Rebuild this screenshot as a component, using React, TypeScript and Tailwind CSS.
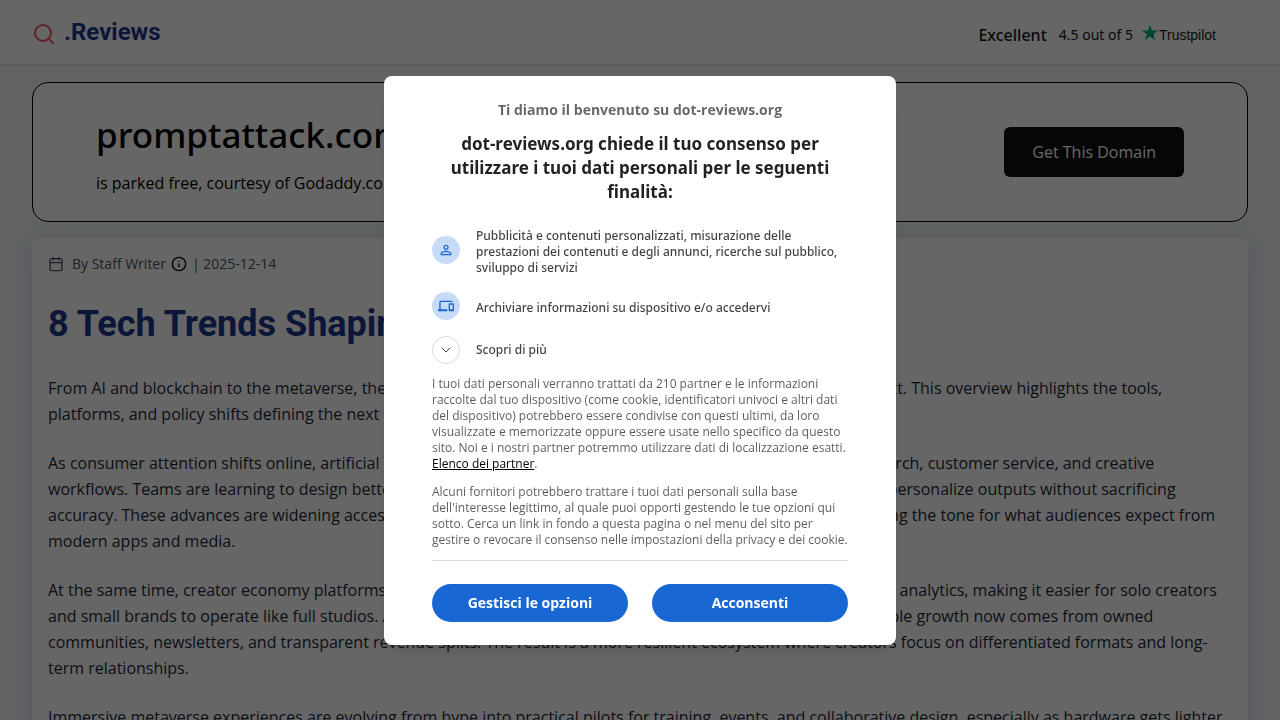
import { Calendar, ChevronDown, Info, Search } from "lucide-react";
import type { ReactNode } from "react";

const paragraphs = [
  "From AI and blockchain to the metaverse, these are the tech forces shaping online entertainment for now and next. This overview highlights the tools, platforms, and policy shifts defining the next era of digital media.",
  "As consumer attention shifts online, artificial intelligence is becoming the engine behind deeper discovery and search, customer service, and creative workflows. Teams are learning to design better prompts, tune models, and review current results to help brands personalize outputs without sacrificing accuracy. These advances are widening access to quality production tools for the smaller creative teams and setting the tone for what audiences expect from modern apps and media.",
  "At the same time, creator economy platforms are bundling payments, memberships, courses, and sharp audience analytics, making it easier for solo creators and small brands to operate like full studios. Ad revenue still matters for many storytellers, but the most sustainable growth now comes from owned communities, newsletters, and transparent revenue splits. The result is a more resilient ecosystem where creators focus on differentiated formats and long-term relationships.",
  "Immersive metaverse experiences are evolving from hype into practical pilots for training, events, and collaborative design, especially as hardware gets lighter and more affordable.",
];

function PersonIcon() {
  return (
    <svg viewBox="0 0 24 24" className="size-4 fill-[#1967d2]" aria-hidden="true">
      <path d="M12 5.900a2.100 2.100 0 1 1 0 4.200 2.100 2.100 0 0 1 0-4.200m0 9c2.970 0 6.100 1.460 6.100 2.100v1.100H5.900V17c0-.640 3.130-2.100 6.100-2.100M12 4C9.790 4 8 5.790 8 8s1.790 4 4 4 4-1.790 4-4-1.790-4-4-4zm0 9c-2.670 0-8 1.340-8 4v3h16v-3c0-2.660-5.330-4-8-4z" />
    </svg>
  );
}

function DevicesIcon() {
  return (
    <svg viewBox="0 0 24 24" className="size-4 fill-[#1967d2]" aria-hidden="true">
      <path d="M4 6h18V4H4c-1.100 0-2 .9-2 2v11H0v3h14v-3H4V6zm19 2h-6c-.55 0-1 .45-1 1v10c0 .55.45 1 1 1h6c.55 0 1-.45 1-1V9c0-.55-.45-1-1-1zm-1 9h-4v-7h4v7z" />
    </svg>
  );
}

function ConsentItem({ icon, children }: { icon: ReactNode; children: ReactNode }) {
  return (
    <li className="flex items-center gap-4">
      <span className="flex size-7 shrink-0 items-center justify-center rounded-full bg-[#c5dbf7]">{icon}</span>
      <span className="pt-1">{children}</span>
    </li>
  );
}

function Header() {
  return (
    <header className="relative flex h-16 shrink-0 items-center justify-between bg-white px-8 shadow-sm">
      <a href="#" className="flex items-center gap-2 pt-1">
        <Search className="size-6 text-[#f2545b]" strokeWidth={2} />
        <span className="pb-1 font-[Roboto,sans-serif] text-2xl font-bold text-blue-900">.Reviews</span>
      </a>
      <div className="flex items-center gap-3 pt-1.5 pr-8 text-[#191919]">
        <span className="font-['Noto_Sans',sans-serif] text-base font-medium">Excellent</span>
        <span className="font-['Noto_Sans',sans-serif] text-sm">4.5 out of 5</span>
        <a href="#" className="-ml-1 flex items-center">
          <svg viewBox="0 0 24 24" className="mb-1 size-[18px]" aria-hidden="true">
            <path fill="#00b67a" d="M12 1l2.800 7.800H23l-6.700 4.900 2.600 7.900L12 16.800l-6.900 4.800 2.600-7.900L1 8.800h8.200z" />
            <path fill="#005128" d="M16.900 15.600l-.6-1.900L12 16.800z" />
          </svg>
          <span className="font-['Liberation_Sans',Arial,sans-serif] text-sm">Trustpilot</span>
        </a>
      </div>
    </header>
  );
}

function ConsentDialog() {
  return (
    <div
      role="dialog"
      aria-modal="true"
      aria-labelledby="consent-title"
      lang="it"
      className="w-full max-w-lg rounded-lg bg-white px-12 pt-6 pb-[23px] text-xs leading-4 shadow-lg"
    >
      <p className="text-center text-sm leading-5 font-bold text-black/60">Ti diamo il benvenuto su dot-reviews.org</p>
      <h2
        id="consent-title"
        className="mt-3 text-center font-['Noto_Sans',sans-serif] text-[17px] leading-6 font-bold text-black/87"
      >
        dot-reviews.org chiede il tuo consenso per utilizzare i tuoi dati personali per le seguenti finalità:
      </h2>
      <ul className="mt-5 flex flex-col gap-4 font-['Noto_Sans',sans-serif] font-medium text-black/75">
        <ConsentItem icon={<PersonIcon />}>
          Pubblicità e contenuti personalizzati, misurazione delle prestazioni dei contenuti e degli annunci, ricerche sul
          pubblico, sviluppo di servizi
        </ConsentItem>
        <ConsentItem icon={<DevicesIcon />}>Archiviare informazioni su dispositivo e/o accedervi</ConsentItem>
      </ul>
      <button
        type="button"
        className="mt-4 flex items-center gap-4 font-['Noto_Sans',sans-serif] font-medium text-black/75"
      >
        <span className="flex size-7 items-center justify-center rounded-full border border-[#dadce0]">
          <ChevronDown className="size-4" strokeWidth={1.5} />
        </span>
        Scopri di più
      </button>
      <div className="mt-3 flex flex-col gap-3 border-b border-[#dadce0] pb-3 text-black/65">
        <p>
          I tuoi dati personali verranno trattati da 210 partner e le informazioni raccolte dal tuo dispositivo (come
          cookie, identificatori univoci e altri dati del dispositivo) potrebbero essere condivise con questi ultimi, da
          loro visualizzate e memorizzate oppure essere usate nello specifico da questo sito. Noi e i nostri partner
          potremmo utilizzare dati di localizzazione esatti.{" "}
          <a href="#" className="text-black underline">
            Elenco dei partner
          </a>
          .
        </p>
        <p>
          Alcuni fornitori potrebbero trattare i tuoi dati personali sulla base dell'interesse legittimo, al quale puoi
          opporti gestendo le tue opzioni qui sotto. Cerca un link in fondo a questa pagina o nel menu del sito per
          gestire o revocare il consenso nelle impostazioni della privacy e dei cookie.
        </p>
      </div>
      <div className="mt-[23px] grid grid-cols-2 gap-6">
        <button type="button" className="rounded-full bg-[#1967d2] py-2 text-sm leading-[22px] font-bold text-white">
          Gestisci le opzioni
        </button>
        <button type="button" className="rounded-full bg-[#1967d2] py-2 text-sm leading-[22px] font-bold text-white">
          Acconsenti
        </button>
      </div>
    </div>
  );
}

export default function App() {
  return (
    <div className="flex h-screen flex-col overflow-hidden bg-[#f0f6f9] font-['Open_Sans',sans-serif]">
      <Header />
      <main className="flex flex-col gap-4 px-8 pt-[18px]">
        <section className="flex items-center justify-between rounded-2xl border border-black bg-white px-[63px] py-7 text-black">
          <div>
            <h2 className="font-['Noto_Sans',sans-serif] text-[35px] leading-12 font-medium">promptattack.com</h2>
            <p className="mt-3.5 text-base leading-5">is parked free, courtesy of Godaddy.com.</p>
          </div>
          <a href="#" className="rounded-md bg-[#111111] px-7 py-3 text-base leading-[26px] text-white">
            Get This Domain
          </a>
        </section>
        <article className="rounded-lg bg-white p-4 text-gray-800 shadow-[0_4px_24px_rgba(49,46,129,0.14)]">
          <div className="flex items-center gap-2 text-sm text-gray-600">
            <Calendar className="size-4" />
            <span className="flex items-center gap-[5px]">
              By Staff Writer <Info className="size-4 text-black" /> | 2025-12-14
            </span>
          </div>
          <h1 className="mt-[30px] mb-[31px] font-[Roboto,sans-serif] text-4xl font-bold text-blue-900">
            8 Tech Trends Shaping Online Entertainment
          </h1>
          <div className="flex flex-col gap-[23px] leading-[26px]">
            {paragraphs.map((text) => (
              <p key={text}>{text}</p>
            ))}
          </div>
        </article>
      </main>
      <div className="fixed inset-0 flex items-center justify-center bg-black/60">
        <ConsentDialog />
      </div>
    </div>
  );
}
